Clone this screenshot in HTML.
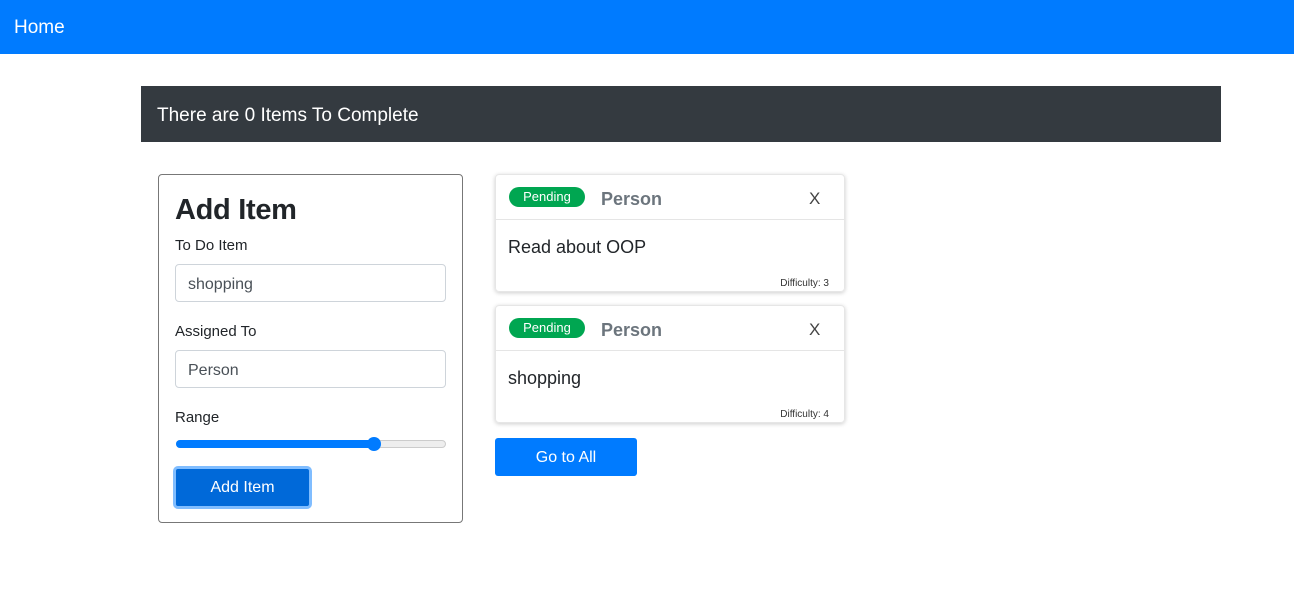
<!DOCTYPE html>
<html><head><style>
*{box-sizing:border-box;margin:0;padding:0}
body{width:1294px;height:605px;background:#fff;font-family:"Liberation Sans",sans-serif;color:#212529;position:relative;overflow:hidden}
.a{position:absolute}
.nav{left:0;top:0;width:1294px;height:54px;background:#007bff;color:#fff;font-size:19px;padding:17px 0 0 14px}
.hdr{left:141px;top:86px;width:1080px;height:56px;background:#343a40;color:#fff;font-size:19px;padding:19px 0 0 16px}
.form{left:158px;top:174px;width:305px;height:349px;border:1px solid #777;border-radius:4px}
.lbl{font-size:15px;color:#212529}
.inp{width:271px;height:38px;border:1px solid #ced4da;border-radius:4px;font-size:16px;color:#495057;padding:11px 12px}
.card{left:495px;width:350px;height:118px;border-radius:4px;box-shadow:0 1px 4px rgba(0,0,0,.2);border:1px solid #e6e6e6}
.badge{left:13px;top:12px;width:76px;height:20px;background:#00a651;border-radius:10px;color:#fff;font-size:13px;text-align:center;line-height:20px}
.per{left:105px;top:14px;font-size:18px;font-weight:bold;color:#6c757d}
.x{left:313px;top:14px;font-size:17px;color:#444}
.line{left:0;top:44px;width:100%;height:1px;background:#e5e5e5}
.txt{left:12px;top:62px;font-size:18px;color:#212529}
.dif{right:15px;top:103px;font-size:10px;color:#333}
</style></head><body>
<div class="a nav">Home</div>
<div class="a hdr">There are 0 Items To Complete</div>
<div class="a form">
 <div class="a" style="left:16px;top:19px;font-size:29px;font-weight:bold;letter-spacing:-0.3px">Add Item</div>
 <div class="a lbl" style="left:16px;top:62px">To Do Item</div>
 <div class="a inp" style="left:16px;top:89px">shopping</div>
 <div class="a lbl" style="left:16px;top:148px">Assigned To</div>
 <div class="a inp" style="left:16px;top:175px">Person</div>
 <div class="a lbl" style="left:16px;top:234px">Range</div>
 <div class="a" style="left:17px;top:265px;width:270px;height:8px;border:1px solid #ccc;border-radius:4px;background:#eee"></div>
 <div class="a" style="left:17px;top:265px;width:200px;height:8px;border-radius:4px;background:#007bff"></div>
 <div class="a" style="left:208px;top:262px;width:14px;height:14px;border-radius:50%;background:#007bff"></div>
 <div class="a" style="left:14px;top:291px;width:139px;height:43px;border:3px solid #80bdff;border-radius:5px;background:#0069d9;color:#fff;font-size:16px;text-align:center;line-height:38px">Add Item</div>
</div>
<div class="a card" style="top:174px">
 <div class="a badge">Pending</div><div class="a per">Person</div><div class="a x">X</div>
 <div class="a line"></div><div class="a txt">Read about OOP</div><div class="a dif">Difficulty: 3</div>
</div>
<div class="a card" style="top:305px">
 <div class="a badge">Pending</div><div class="a per">Person</div><div class="a x">X</div>
 <div class="a line"></div><div class="a txt">shopping</div><div class="a dif">Difficulty: 4</div>
</div>
<div class="a" style="left:495px;top:438px;width:142px;height:38px;background:#007bff;border-radius:3px;color:#fff;font-size:16px;text-align:center;line-height:40px">Go to All</div>
</body></html>
